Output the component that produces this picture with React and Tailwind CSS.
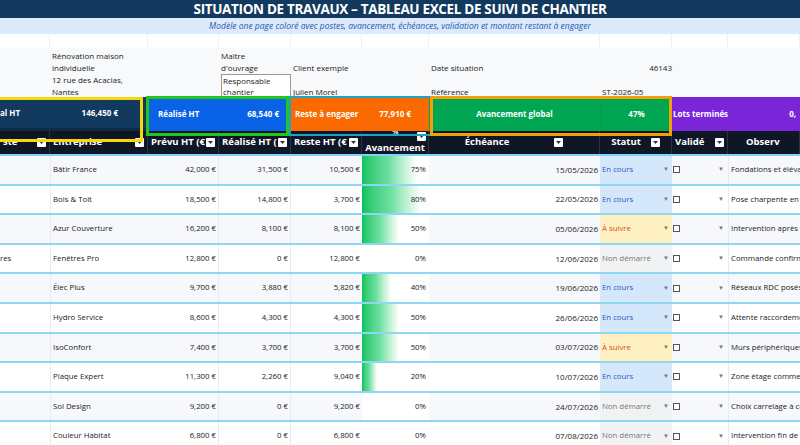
import React from "react";

const G = "grid grid-cols-[50px_98px_71px_72px_71px_67px_171px_72px_56px_72px]";

const rows = [
  ["", "Bâtir France", "42,000 €", "31,500 €", "10,500 €", 75, "15/05/2026", "c", "Fondations et élévation"],
  ["", "Bois & Toit", "18,500 €", "14,800 €", "3,700 €", 80, "22/05/2026", "c", "Pose charpente en fin"],
  ["", "Azur Couverture", "16,200 €", "8,100 €", "8,100 €", 50, "05/06/2026", "s", "Intervention après validation"],
  ["res", "Fenêtres Pro", "12,800 €", "0 €", "12,800 €", 0, "12/06/2026", "n", "Commande confirmée"],
  ["", "Élec Plus", "9,700 €", "3,880 €", "5,820 €", 40, "19/06/2026", "c", "Réseaux RDC posés"],
  ["", "Hydro Service", "8,600 €", "4,300 €", "4,300 €", 50, "26/06/2026", "c", "Attente raccordement"],
  ["", "IsoConfort", "7,400 €", "3,700 €", "3,700 €", 50, "03/07/2026", "s", "Murs périphériques"],
  ["", "Plaque Expert", "11,300 €", "2,260 €", "9,040 €", 20, "10/07/2026", "c", "Zone étage commencée"],
  ["", "Sol Design", "9,200 €", "0 €", "9,200 €", 0, "24/07/2026", "n", "Choix carrelage à confirmer"],
  ["", "Couleur Habitat", "6,800 €", "0 €", "6,800 €", 0, "07/08/2026", "n", "Intervention fin de chantier"],
];

const st = {
  c: ["En cours", "bg-[#d4e7fb] text-[#2a5bc0]"],
  s: ["À suivre", "bg-[#fff0c2] text-[#c8561a]"],
  n: ["Non démarré", "bg-[#f0f2f4] text-[#777]"],
};

const Dd = () => (
  <span className="ml-auto w-[9px] h-[9px] bg-white rounded-[1px] flex items-center justify-center shrink-0">
    <svg width="5" height="3" viewBox="0 0 5 3"><path d="M0 0h5L2.5 3z" fill="#333" /></svg>
  </span>
);

const H = ({ children, c = "justify-center" }) => (
  <div className={`flex items-center ${c} px-[3px] border-r border-[#2a3346] overflow-hidden whitespace-nowrap`}>{children}</div>
);

export default function App() {
  return (
    <div className="w-[800px] h-[445px] overflow-hidden bg-white relative text-[#222]" style={{ fontFamily: "'Open Sans','Liberation Sans',sans-serif" }}>
      <div className="h-[18px] bg-[#133a5e] text-white font-bold text-[13.5px] flex items-center justify-center tracking-tight">SITUATION DE TRAVAUX – TABLEAU EXCEL DE SUIVI DE CHANTIER</div>
      <div className="h-[16px] bg-[#dcebfb] text-[#2b55b0] italic text-[8.5px] flex items-center justify-center">Modèle one page coloré avec postes, avancement, échéances, validation et montant restant à engager</div>
      <div className={`${G} h-[14px] bg-white`}>
        {Array.from({ length: 10 }).map((_, i) => <div key={i} className="border-r border-[#eef0f3]" />)}
      </div>
      <div className={`${G} h-[49px] bg-[#f7f9fb] text-[8px] leading-[12px]`}>
        <div />
        <div className="pt-[2px] pl-[2px]">Rénovation maison<br />individuelle<br />12 rue des Acacias,<br />Nantes</div>
        <div />
        <div className="flex flex-col pl-[2px]">
          <div className="pt-[2px]">Maître<br />d'ouvrage</div>
          <div className="border border-[#999] flex-1 pl-[1px] leading-[11px] bg-white">Responsable<br />chantier</div>
        </div>
        <div className="flex flex-col justify-end pl-[2px]"><div className="mb-[12px]">Client exemple</div><div>Julien Morel</div></div>
        <div />
        <div className="flex flex-col justify-end pl-[2px]"><div className="mb-[12px]">Date situation</div><div>Référence</div></div>
        <div className="flex flex-col justify-end"><div className="mb-[12px] text-right">46143</div><div className="pl-[2px] whitespace-nowrap">ST-2026-05</div></div>
        <div /><div />
      </div>
      <div className={`${G} h-[34px] text-white font-bold text-[8px]`}>
        <div className="bg-[#123a5e] border-b-[3px] border-[#0e2b45] flex items-center">al HT</div>
        <div className="bg-[#123a5e] border-b-[3px] border-[#0e2b45] flex items-center justify-end pr-[30px]">146,450 €</div>
        <div className="bg-[#0a62e6] flex items-center pl-[10px]">Réalisé HT</div>
        <div className="bg-[#0a62e6] flex items-center justify-end pr-[12px]">68,540 €</div>
        <div className="bg-[#fa6a00] flex items-center pl-[4px] whitespace-nowrap">Reste à engager</div>
        <div className="bg-[#fa6a00] flex items-center justify-end pr-[18px]">77,910 €</div>
        <div className="bg-[#00a651] flex items-center justify-center">Avancement global</div>
        <div className="bg-[#00a651] flex items-center justify-center border-l border-[#0b9a4c]">47%</div>
        <div className="bg-[#7a26d8] flex items-center whitespace-nowrap overflow-hidden pl-[1px]">Lots terminés</div>
        <div className="bg-[#7a26d8] flex items-center justify-end pr-[4px]">0,</div>
      </div>
      <div className={`${G} h-[25px] bg-[#0f1726] text-white font-bold text-[9.5px] border-b-2 border-[#7dd3fc]`}>
        <H c="justify-start">ste<Dd /></H>
        <H>Entreprise<Dd /></H>
        <H>Prévu HT (€<Dd /></H>
        <H>Réalisé HT (<Dd /></H>
        <H>Reste HT (€<Dd /></H>
        <div className="relative flex items-end justify-center overflow-hidden border-r border-[#2a3346]"><span className="leading-[11px] pb-[1px]">Avancement</span><span className="absolute top-[1px] right-[2px]"><Dd /></span><span className="absolute top-[-4px] left-[30px] text-[7px]">%</span></div>
        <H>Échéance<span className="ml-[45px]"><Dd /></span></H>
        <H>Statut<span className="ml-[10px]"><Dd /></span></H>
        <H>Validé<Dd /></H>
        <H c="justify-start"><span className="ml-[15px]">Observ</span></H>
      </div>
      {rows.map((r, i) => {
        const [lbl, cls] = st[r[7]];
        return (
          <div key={i} className={`${G} h-[29.6px] text-[7.8px] border-b-2 border-[#8fd6f5] ${i % 2 ? "bg-white" : "bg-[#f6f8fb]"}`}>
            <div className="flex items-center overflow-hidden whitespace-nowrap">{r[0]}</div>
            <div className="flex items-center pl-[2px] border-l border-[#e8ecf0] whitespace-nowrap">{r[1]}</div>
            <div className="flex items-center justify-end pr-[2px] border-r border-[#e8ecf0]">{r[2]}</div>
            <div className="flex items-center justify-end pr-[2px] border-r border-[#e8ecf0]">{r[3]}</div>
            <div className="flex items-center justify-end pr-[2px]">{r[4]}</div>
            <div className="relative flex items-center justify-end pr-[3px] bg-white">
              <div className="absolute left-0 top-0 bottom-0 bg-gradient-to-r from-[#00c461] via-[#6ee0a4] to-white" style={{ width: `${r[5] * 1.1}%` }} />
              <span className="relative">{r[5]}%</span>
            </div>
            <div className="flex items-center justify-end pr-[2px] text-[8px]">{r[6]}</div>
            <div className={`flex items-center pl-[2px] ${cls}`}>{lbl}<span className="ml-auto mr-[3px] text-[#777] text-[6px]">▼</span></div>
            <div className="flex items-center pl-[1px]"><span className="w-[7px] h-[7px] border border-[#555] bg-white" /><span className="ml-auto mr-[4px] text-[#777] text-[6px]">▼</span></div>
            <div className="flex items-center pl-[2px] whitespace-nowrap overflow-hidden border-l border-[#e8ecf0]">{r[8]}</div>
          </div>
        );
      })}
      <div className="absolute left-[-4px] top-[97px] w-[147px] h-[45px] border-[3px] border-[#f5d90a] pointer-events-none" />
      <div className="absolute left-[146px] top-[96px] w-[143px] h-[40px] border-[3px] border-[#22c51e]" />
      <div className="absolute left-[289px] top-[96px] w-[143px] h-[40px] border-[2px] border-[#1aa4c8]" />
      <div className="absolute left-[430px] top-[96px] w-[242px] h-[40px] border-[3px] border-[#f59e0b]" />
    </div>
  );
}
